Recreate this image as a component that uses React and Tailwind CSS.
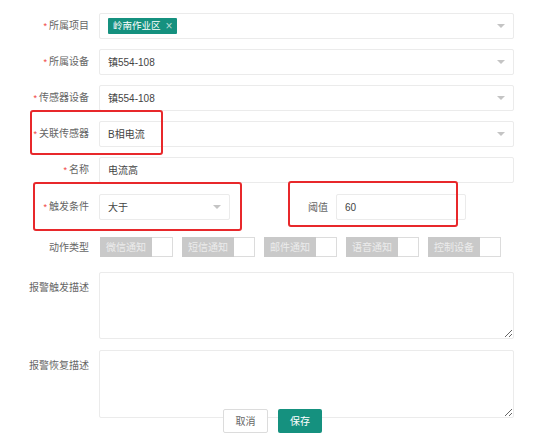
import React from "react";

const FONT = { fontFamily: '"Liberation Sans", "Noto Sans CJK SC", sans-serif' };

function Label({ text, required, top }) {
  return (
    <div
      className={`w-[99px] shrink-0 pr-[10px] text-right text-[10px] text-[#666] ${top ? "self-start pt-[8px]" : ""}`}
    >
      {required && <span className="text-[#f04040] mr-[2px] text-[9px]">*</span>}
      {text}
    </div>
  );
}

function Arrow() {
  return (
    <span className="w-0 h-0 border-l-[4px] border-r-[4px] border-t-[4px] border-l-transparent border-r-transparent border-t-[#c4c4c4]" />
  );
}

function SelectBox({ children, arrow = true, w = "w-[415px]" }) {
  return (
    <div
      className={`${w} h-[26px] border border-[#ebebeb] rounded-[2px] bg-white flex items-center pl-[8px] pr-[8px] text-[10px] text-[#444]`}
    >
      <div className="flex-1 flex items-center">{children}</div>
      {arrow && <Arrow />}
    </div>
  );
}

function Toggle({ text }) {
  return (
    <div className="flex h-[20px] w-[73px]">
      <div className="w-[52px] bg-[#c9c9c9] text-[#ececec] text-[10px] flex items-center justify-center">
        {text}
      </div>
      <div className="flex-1 border border-[#dcdcdc] border-l-0 bg-white" />
    </div>
  );
}

export default function App() {
  return (
    <div className="relative w-[541px] h-[434px] bg-white overflow-hidden" style={FONT}>
      <div className="pt-[13px] flex flex-col">
        <div className="flex items-center">
          <Label text="所属项目" required />
          <SelectBox>
            <span className="h-[16px] bg-[#15917f] text-white text-[9.5px] pl-[5px] pr-[4px] flex items-center rounded-[1px]">
              岭南作业区
              <span className="ml-[5px] text-[#b8ddd7] text-[12px] leading-none">×</span>
            </span>
          </SelectBox>
        </div>
        <div className="flex items-center mt-[10px]">
          <Label text="所属设备" required />
          <SelectBox>镇554-108</SelectBox>
        </div>
        <div className="flex items-center mt-[10px]">
          <Label text="传感器设备" required />
          <SelectBox>镇554-108</SelectBox>
        </div>
        <div className="flex items-center mt-[10px]">
          <Label text="关联传感器" required />
          <SelectBox>B相电流</SelectBox>
        </div>
        <div className="flex items-center mt-[10px]">
          <Label text="名称" required />
          <SelectBox arrow={false}>电流高</SelectBox>
        </div>
        <div className="flex items-center mt-[11px]">
          <Label text="触发条件" required />
          <SelectBox w="w-[131px]">大于</SelectBox>
          <div className="w-[106px] pr-[8px] text-right text-[10px] text-[#666]">阈值</div>
          <SelectBox w="w-[130px]" arrow={false}>60</SelectBox>
        </div>
        <div className="flex items-center mt-[17px]">
          <Label text="动作类型" />
          <div className="flex gap-[9px] pl-[1px]">
            <Toggle text="微信通知" />
            <Toggle text="短信通知" />
            <Toggle text="邮件通知" />
            <Toggle text="语音通知" />
            <Toggle text="控制设备" />
          </div>
        </div>
        <div className="flex mt-[15px]">
          <Label text="报警触发描述" top />
          <textarea className="w-[415px] h-[67px] border border-[#ebebeb] rounded-[2px] outline-none resize-y" />
        </div>
        <div className="flex mt-[11px]">
          <Label text="报警恢复描述" top />
          <textarea className="w-[415px] h-[68px] border border-[#ebebeb] rounded-[2px] outline-none resize-y" />
        </div>
        <div className="relative flex gap-[10px] pl-[223px] mt-[-9px]">
          <div className="w-[45px] h-[24px] border border-[#dcdcdc] bg-white rounded-[2px] text-[10px] text-[#666] flex items-center justify-center">
            取消
          </div>
          <div className="w-[44px] h-[24px] bg-[#15917f] rounded-[2px] text-[10px] text-white flex items-center justify-center">
            保存
          </div>
        </div>
      </div>

      {/* annotation highlights */}
      <div className="absolute left-[30px] top-[110px] w-[133px] h-[45px] border-2 border-[#e8282b] rounded-[3px] pointer-events-none" />
      <div className="absolute left-[33px] top-[182px] w-[209px] h-[49px] border-2 border-[#e8282b] rounded-[3px] pointer-events-none" />
      <div className="absolute left-[288px] top-[181px] w-[170px] h-[46px] border-2 border-[#e8282b] rounded-[3px] pointer-events-none" />
    </div>
  );
}
